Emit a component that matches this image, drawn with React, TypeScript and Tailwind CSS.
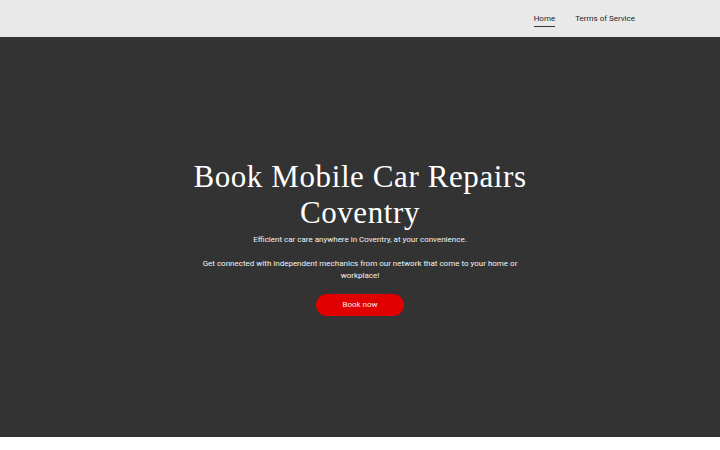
import React from "react";

export default function App() {
  return (
    <div className="w-[720px] h-[450px] bg-white" style={{ fontFamily: "Roboto, 'Liberation Sans', sans-serif" }}>
      <header className="h-[37px] bg-[#e9e9e9] flex items-center justify-end pr-[85px]">
        <nav className="flex items-center gap-[20px] text-[8px] text-[#1f1f1f]">
          <a className="relative leading-[12px] pt-[1px]">
            Home
            <span className="absolute left-0 right-0 -bottom-[2px] h-[1px] bg-[#333]" />
          </a>
          <a className="leading-[12px] pt-[1px]">Terms of Service</a>
        </nav>
      </header>
      <section className="h-[400px] bg-[#333333] flex flex-col items-center justify-center text-white text-center">
        <h1
          className="text-[31px] leading-[36px] tracking-[0.6px] font-normal"
          style={{ fontFamily: "'Liberation Serif', serif" }}
        >
          Book Mobile Car Repairs
          <br />
          Coventry
        </h1>
        <p className="text-[8px] leading-[12px] mt-[3px] text-[#f4f4f4]">
          Efficient car care anywhere in Coventry, at your convenience.
        </p>
        <p className="text-[8px] leading-[12px] mt-[12px] max-w-[320px] text-[#f4f4f4]">
          Get connected with independent mechanics from our network that come to your home or workplace!
        </p>
        <button className="mt-[12px] w-[88px] h-[22px] rounded-full bg-[#e00000] text-[8px] text-[#fde8e8]">
          Book now
        </button>
      </section>
    </div>
  );
}
